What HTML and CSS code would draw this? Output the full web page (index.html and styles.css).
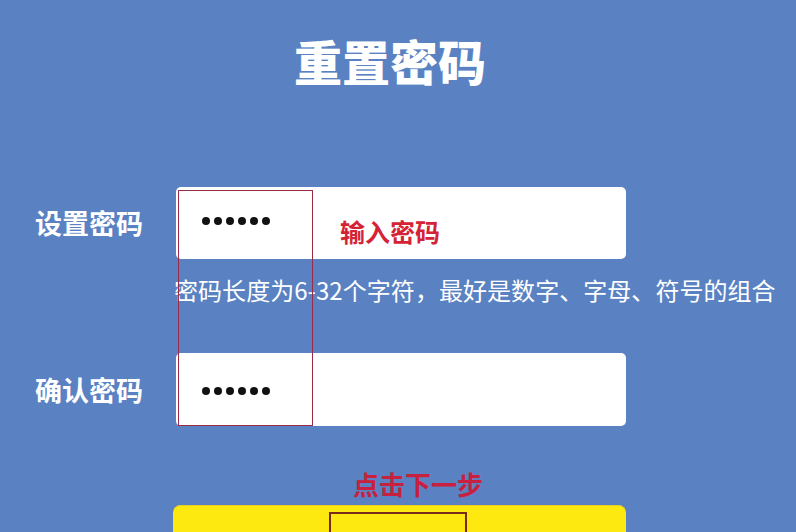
FILE: index.html
```html
<!DOCTYPE html>
<html lang="zh-CN">
<head>
<meta charset="utf-8">
<title>重置密码</title>
<link rel="stylesheet" href="styles.css">
</head>
<body>
<main class="page">
  <h1 class="title">重置密码</h1>
  <div class="form">
    <div class="row">
      <label class="label">设置密码</label>
      <div class="field field-first">
        <span class="dots" aria-label="••••••"><i></i><i></i><i></i><i></i><i></i><i></i></span>
        <span class="note">输入密码</span>
      </div>
    </div>
    <p class="hint">密码长度为6-32个字符，最好是数字、字母、符号的组合</p>
    <div class="row">
      <label class="label">确认密码</label>
      <div class="field field-second">
        <span class="dots" aria-label="••••••"><i></i><i></i><i></i><i></i><i></i><i></i></span>
      </div>
    </div>
    <p class="cta-note">点击下一步</p>
    <div class="btn-row">
      <div class="btn"><span class="btn-mark"></span></div>
    </div>
    <div class="mark-fields"></div>
  </div>
</main>
</body>
</html>
```

FILE: styles.css
```css
html, body {
  margin: 0;
  padding: 0;
}
body {
  width: 796px;
  height: 532px;
  overflow: hidden;
  background: #5a82c2;
  font-family: "Noto Sans CJK SC", "Noto Sans", sans-serif;
  color: #ffffff;
}
.page {
  display: flex;
  flex-direction: column;
}
.title {
  margin: 36px 0 0;
  padding-right: 16px;
  text-align: center;
  font-size: 48px;
  line-height: 48px;
  font-weight: 900;
  color: #ffffff;
}
.form {
  position: relative;
  display: flex;
  flex-direction: column;
}
.row {
  display: flex;
  align-items: center;
  margin-top: 103px;
}
.row + .hint + .row {
  margin-top: 48px;
}
.label {
  width: 141px;
  padding-left: 35px;
  box-sizing: content-box;
  font-size: 27px;
  font-weight: 700;
  line-height: 30px;
  color: #ffffff;
}
.field {
  position: relative;
  width: 450px;
  background: #ffffff;
  border-radius: 5px;
  display: flex;
  align-items: center;
}
.field-first {
  height: 72px;
}
.field-second {
  height: 73px;
}
.dots {
  display: flex;
  gap: 4px;
  margin-left: 26px;
  margin-top: -4px;
}
.field-second .dots {
  margin-top: 2px;
}
.dots i {
  display: block;
  width: 8px;
  height: 8px;
  border-radius: 50%;
  background: #111111;
}
.note {
  margin-left: 70px;
  margin-top: 16px;
  font-size: 25px;
  font-weight: 700;
  line-height: 30px;
  color: #d42335;
}
.hint {
  margin: 16px 0 0;
  padding-left: 174px;
  font-size: 24px;
  line-height: 30px;
  letter-spacing: 0.05px;
  white-space: nowrap;
  color: #ffffff;
}
.cta-note {
  margin: 43px 0 0;
  padding-left: 353px;
  font-size: 26px;
  font-weight: 700;
  line-height: 30px;
  color: #c8203e;
}
.btn-row {
  display: flex;
  padding-left: 173px;
  margin-top: 6px;
}
.btn {
  position: relative;
  width: 453px;
  height: 27px;
  background: #fde910;
  border-radius: 8px 8px 0 0;
  box-shadow: inset 0 1px 0 #e6cf20;
}
.btn-mark {
  position: absolute;
  left: 156px;
  top: 7px;
  width: 138px;
  height: 20px;
  border: 2px solid #7a2a1a;
  border-bottom: 0;
  box-sizing: border-box;
}
.mark-fields {
  position: absolute;
  left: 178px;
  top: 106px;
  width: 135px;
  height: 236px;
  border: 1.5px solid #9a2c48;
  box-sizing: border-box;
}
```
